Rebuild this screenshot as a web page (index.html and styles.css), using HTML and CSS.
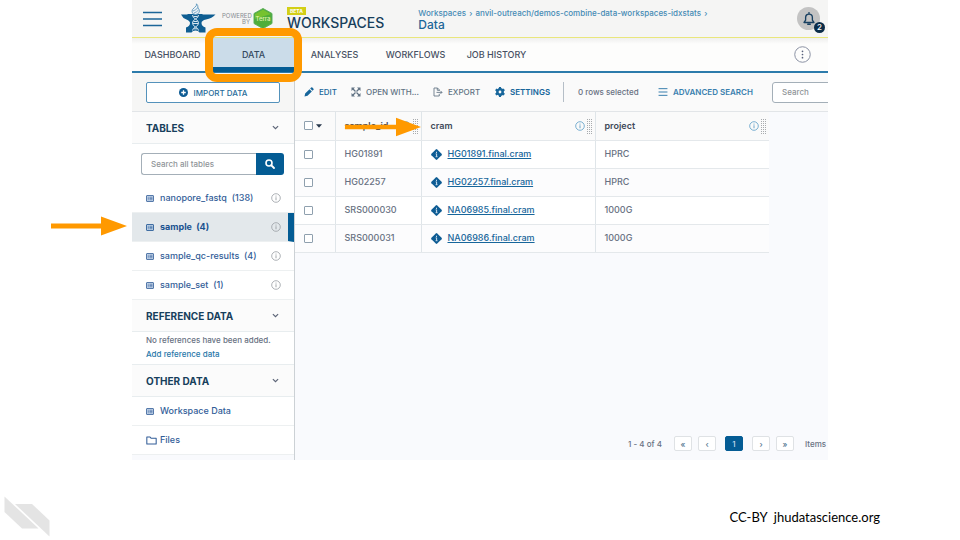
FILE: index.html
```html
<!DOCTYPE html>
<html lang="en">
<head>
<meta charset="utf-8">
<meta name="viewport" content="width=device-width, initial-scale=1">
<title>Workspaces - Data</title>
<link rel="stylesheet" href="styles.css">
</head>
<body>
<svg class="defs" aria-hidden="true">
  <symbol id="i-list" viewBox="0 0 16 14"><rect x="1" y="1" width="14" height="12" rx="1" fill="#c3d4e8" stroke="currentColor" stroke-width="1.600"/><path d="M3.500 4.500h2M7 4.500h6M3.500 7h2M7 7h6M3.500 9.500h2M7 9.500h6" stroke="currentColor" stroke-width="1.200"/></symbol>
  <symbol id="i-info" viewBox="0 0 20 20"><circle cx="10" cy="10" r="8.600" fill="none" stroke="currentColor" stroke-width="1.600"/><path d="M10 8.500v6M10 5.200v2" stroke="currentColor" stroke-width="1.800"/></symbol>
  <symbol id="i-chev" viewBox="0 0 12 8"><path d="M1.500 1.500L6 6l4.500-4.500" fill="none" stroke="currentColor" stroke-width="2"/></symbol>
  <symbol id="i-diamond" viewBox="0 0 20 20"><path d="M8.700.8Q10-.4 11.300.8l7.900 7.900q1.200 1.300 0 2.600l-7.900 7.900q-1.300 1.200-2.600 0L.8 11.300q-1.200-1.300 0-2.600z" fill="#0e5c94"/><path d="M10 5v2.200M8.500 8.800h1.700v4.800M8.400 14h3.400" fill="none" stroke="#dcebf6" stroke-width="1.700"/></symbol>
  <symbol id="i-grip" viewBox="0 0 5 16"><path d="M.5 1v15M2.500 1v15M4.500 1v15" stroke="#a8abae" stroke-width="1" stroke-dasharray="1 1"/></symbol>
</svg>

<div class="slide">
  <div class="app">
    <header class="topbar">
      <button class="icon-btn menu" aria-label="Menu"><svg viewBox="0 0 20 16"><path d="M0 1.500h19M0 8h19M0 14.500h19" stroke="#1c6698" stroke-width="1.600"/></svg></button>
      <a class="logo" href="#" aria-label="AnVIL"><svg viewBox="0 0 35 31">
        <path d="M0 11.500h6.500V11h15v.5H34.500q-3.500 4-9.500 5-4.500 1-4.500 3.500 0 3 4 4.500v5H18.500q-1-2-4-2t-4 2H5v-5q4-1.500 4-4.500 0-2-3.500-3.500Q1.500 15 0 11.500z" fill="#0f5e92"/>
        <path d="M15.500.8q.5 2.200-2 3.700-3 2-2.500 4.500.5 2.500 3.500 2.500t3.800-2.500q.5-2.500-1.300-4 .2-2.700-1.500-4.200z" fill="#eef4f8" stroke="#5b95bb" stroke-width=".9"/>
        <path d="M12 8q3-1 5-3.500M13 10q3-1 4.500-3" fill="none" stroke="#5b95bb" stroke-width=".8"/>
        <path d="M11.500 12q0 2.500 3 4t3 4-3 4-3 3.500M17.500 12q0 2.500-3 4t-3 4 3 4 3 3.500M12.500 13.500h4M12.500 18.500h4M12 20.500h5M12.800 25.800h3.400" fill="none" stroke="#d5e5ef" stroke-width="1"/>
      </svg></a>
      <div class="powered">POWERED<br>BY</div>
      <div class="terra"><svg viewBox="0 0 20 21" aria-hidden="true"><path d="M10 .5l9 5v10l-9 5-9-5v-10z" fill="#43a047" stroke="#5fb357"/><path d="M10 1.500l8 4.500v9l-8 4.500L2 15V6z" fill="#76c22f"/><path d="M1.500 11L18 6v9l-8 4.500L2 15z" fill="#4fae3a"/></svg><span>Terra</span></div>
      <div class="brand"><span class="beta">BETA</span><span class="brand-name">WORKSPACES</span></div>
      <div class="crumbs">
        <nav aria-label="Breadcrumb"><a href="#">Workspaces</a> <span class="sep">›</span> <a href="#">anvil-outreach/demos-combine-data-workspaces-idxstats</a> <span class="sep">›</span></nav>
        <h1>Data</h1>
      </div>
      <button class="icon-btn bell" aria-label="Notifications, 2"><svg viewBox="0 0 24 24"><path d="M3.500 18h17l-2.700-4V9.500a5.800 5.800 0 0 0-11.600 0V14zM12 3.500V1M9.800 21h4.400" fill="none" stroke="#173f60" stroke-width="2.300" stroke-linejoin="round" stroke-linecap="round"/></svg><span class="count">2</span></button>
    </header>

    <nav class="tabs" aria-label="Workspace">
      <a href="#">DASHBOARD</a>
      <a href="#" class="current" aria-current="page">DATA<span class="ring"></span></a>
      <a href="#">ANALYSES</a>
      <a href="#">WORKFLOWS</a>
      <a href="#">JOB HISTORY</a>
      <button class="icon-btn more" aria-label="More actions"><svg viewBox="0 0 16 16"><circle cx="8" cy="8" r="7.300" fill="none" stroke="#858da0" stroke-width=".9"/><circle cx="8" cy="5" r=".8" fill="#59627c"/><circle cx="8" cy="8" r=".8" fill="#59627c"/><circle cx="8" cy="11" r=".8" fill="#59627c"/></svg></button>
    </nav>

    <div class="workspace">
      <aside class="sidebar">
        <div class="import"><button><svg viewBox="0 0 18 18" aria-hidden="true"><circle cx="9" cy="9" r="9" fill="#0e5c94"/><path d="M9 4.500v9M4.500 9h9" stroke="#fff" stroke-width="2.600"/></svg>IMPORT DATA</button></div>

        <h2>TABLES<svg><use href="#i-chev"/></svg></h2>
        <form class="find"><input type="search" aria-label="Search all tables" placeholder="Search all tables"><button type="button" aria-label="Search"><svg viewBox="0 0 20 20"><circle cx="8" cy="8" r="6" fill="none" stroke="#fff" stroke-width="3.200"/><path d="M12.500 12.500l5.500 5.500" stroke="#fff" stroke-width="3.600" stroke-linecap="round"/></svg></button></form>
        <ul>
          <li><a href="#"><svg class="list"><use href="#i-list"/></svg>nanopore_fastq&nbsp; (138)<svg class="info"><use href="#i-info"/></svg></a></li>
          <li><a href="#" class="selected"><svg class="list"><use href="#i-list"/></svg>sample&nbsp; (4)<svg class="info"><use href="#i-info"/></svg></a></li>
          <li><a href="#"><svg class="list"><use href="#i-list"/></svg>sample_qc-results&nbsp; (4)<svg class="info"><use href="#i-info"/></svg></a></li>
          <li><a href="#"><svg class="list"><use href="#i-list"/></svg>sample_set&nbsp; (1)<svg class="info"><use href="#i-info"/></svg></a></li>
        </ul>

        <h2>REFERENCE DATA<svg><use href="#i-chev"/></svg></h2>
        <div class="note"><p>No references have been added.</p><a href="#">Add reference data</a></div>

        <h2>OTHER DATA<svg><use href="#i-chev"/></svg></h2>
        <ul>
          <li><a href="#"><svg class="list"><use href="#i-list"/></svg>Workspace Data</a></li>
          <li><a href="#"><svg class="folder" viewBox="0 0 20 16"><path d="M1.500 1.500h5.500l2.500 2.500h9v10.500h-17z" fill="none" stroke="currentColor" stroke-width="1.900" stroke-linejoin="round"/></svg>Files</a></li>
        </ul>
      </aside>

      <main>
        <div class="toolbar">
          <button class="edit"><svg viewBox="0 0 20 20"><path d="M1 19l1.300-6L11 4.300 15.700 9 7 17.700zM12.300 3l2-2q1.200-1 2.400 0L19 3.300q1 1.200 0 2.400l-2 2z" fill="currentColor"/></svg>EDIT</button>
          <button class="open"><svg viewBox="0 0 20 20"><path d="M3 3l14 14M17 3L3 17" stroke="currentColor" stroke-width="2.600"/><path d="M1 1h7L1 8zM19 1v7l-7-7zM1 19v-7l7 7zM19 19h-7l7-7z" fill="currentColor"/><path d="M10 8l2 2-2 2-2-2z" fill="#fafafa"/></svg>OPEN WITH...</button>
          <button class="export"><svg viewBox="0 0 20 20"><path d="M12.500 13.500V18H2V2h7l3.500 3.500V8M8.500 2v4.500h4M7 10.800h11M15 7.800l3 3-3 3" fill="none" stroke="currentColor" stroke-width="1.700"/></svg>EXPORT</button>
          <button class="settings"><svg viewBox="0 0 20 20"><circle cx="10" cy="10" r="5.300" fill="none" stroke="currentColor" stroke-width="5"/><path d="M10 0v4M10 16v4M1.300 5l3.500 2M15.200 13l3.500 2M1.300 15l3.500-2M15.200 7l3.500-2" stroke="currentColor" stroke-width="4.200"/></svg>SETTINGS</button>
          <span class="rows">0 rows selected</span>
          <button class="advanced"><svg viewBox="0 0 18 16"><path d="M1 2h16M1 8h16M1 14h16" stroke="currentColor" stroke-width="1.800"/></svg>ADVANCED SEARCH</button>
          <input type="search" aria-label="Search rows" placeholder="Search">
        </div>

        <table>
          <colgroup><col class="c-check"><col class="c-id"><col class="c-wide"><col class="c-wide"></colgroup>
          <thead><tr>
            <th><span class="pick"><input type="checkbox" aria-label="Select all"><svg class="caret" viewBox="0 0 10 6"><path d="M0 0h10L5 6z" fill="#27374b"/></svg></span></th>
            <th><span class="head">sample_id<svg class="info"><use href="#i-info"/></svg><svg class="grip"><use href="#i-grip"/></svg></span></th>
            <th><span class="head">cram<svg class="info"><use href="#i-info"/></svg><svg class="grip"><use href="#i-grip"/></svg></span></th>
            <th><span class="head">project<svg class="info"><use href="#i-info"/></svg><svg class="grip"><use href="#i-grip"/></svg></span></th>
          </tr></thead>
          <tbody>
            <tr><td><span class="pick"><input type="checkbox" aria-label="Select HG01891"></span></td><td>HG01891</td><td><span class="file"><svg><use href="#i-diamond"/></svg><a href="#">HG01891.final.cram</a></span></td><td>HPRC</td></tr>
            <tr><td><span class="pick"><input type="checkbox" aria-label="Select HG02257"></span></td><td>HG02257</td><td><span class="file"><svg><use href="#i-diamond"/></svg><a href="#">HG02257.final.cram</a></span></td><td>HPRC</td></tr>
            <tr><td><span class="pick"><input type="checkbox" aria-label="Select SRS000030"></span></td><td>SRS000030</td><td><span class="file"><svg><use href="#i-diamond"/></svg><a href="#">NA06985.final.cram</a></span></td><td>1000G</td></tr>
            <tr><td><span class="pick"><input type="checkbox" aria-label="Select SRS000031"></span></td><td>SRS000031</td><td><span class="file"><svg><use href="#i-diamond"/></svg><a href="#">NA06986.final.cram</a></span></td><td>1000G</td></tr>
          </tbody>
        </table>

        <div class="pager">
          <span class="range">1 - 4 of 4</span>
          <button aria-label="First page">«</button>
          <button aria-label="Previous page">‹</button>
          <button class="on">1</button>
          <button aria-label="Next page">›</button>
          <button aria-label="Last page">»</button>
          <span class="items">Items</span>
        </div>
      </main>
    </div>
    <svg class="arrow to-table" viewBox="0 0 76 20" aria-hidden="true"><path d="M0 7.500h50V.5L76 10 50 19.500v-7H0z" fill="#ff9900"/></svg>
    <svg class="arrow to-column" viewBox="0 0 76 20" aria-hidden="true"><path d="M0 7.800h51V.8L76 10 51 19.200v-7H0z" fill="#ff9900"/></svg>
  </div>

  <footer>
    <svg viewBox="0 0 46 41" aria-hidden="true"><path d="M.5.5l34 32H18L.5 16z" fill="#e4e4e4"/><path d="M11 8h17l17.500 16.500v16z" fill="#e4e4e4"/></svg>
    <p>CC-BY&nbsp; jhudatascience.org</p>
  </footer>
</div>
</body>
</html>
```
FILE: styles.css
```css
* { box-sizing: border-box; }

body {
  margin: 0;
  background: #fff;
  color: #687182;
  font: 500 8px/12px Inter, "Open Sans", sans-serif;
}

a { color: inherit; text-decoration: none; }
button, input { margin: 0; font: inherit; color: inherit; }
button { display: flex; align-items: center; padding: 0; border: 0; background: none; cursor: pointer; white-space: nowrap; }
h1, h2, p, ul { margin: 0; padding: 0; }
ul { list-style: none; }
svg { display: block; flex: none; }
.defs { position: absolute; width: 0; height: 0; }

.slide { min-height: 100vh; display: flex; flex-direction: column; justify-content: space-between; }
.app { position: relative; margin: 0 13.75%; background: #f9fafd; }

/* Top bar */
.topbar { display: flex; align-items: center; height: 38px; padding: 0 3px 0 11px; background: #f5f5f4; border-bottom: 1px solid #e9e67c; white-space: nowrap; }
.menu svg { width: 20px; height: 16px; }
.logo { margin-left: 18px; }
.logo svg { width: 35px; height: 31px; }
.powered { width: 28px; margin-left: 6px; color: #858b91; font-size: 6px; line-height: 6px; font-weight: 400; text-align: right; }
.terra { display: grid; place-items: center; margin-left: 3px; }
.terra > * { grid-area: 1 / 1; }
.terra svg { width: 20px; height: 21px; }
.terra span { color: #e5f7b0; font-size: 6px; line-height: 8px; }
.brand { display: flex; flex-direction: column; align-items: flex-start; margin-left: 14px; }
.beta { padding: 0 3px; background: #d3cf16; color: #fff; font-size: 5px; line-height: 8px; font-weight: 700; }
.brand-name { color: #173f5c; font-size: 14px; line-height: 16px; }
.crumbs { margin-left: 34px; color: #468bb5; }
.sep { margin: 0 1px; }
.crumbs h1 { color: #1c6698; font-size: 12px; line-height: 12px; font-weight: 500; }
.bell { position: relative; justify-content: center; width: 23px; height: 23px; margin-left: auto; margin-right: 5px; border-radius: 50%; background: #c3c3c3; }
.bell svg { width: 14px; height: 14px; }
.count { position: absolute; right: -5px; bottom: -3px; width: 11px; height: 11px; border-radius: 50%; background: #0b2c49; color: #fff; font-size: 8px; line-height: 11px; }

/* Tabs */
.tabs { display: flex; height: 35px; background: linear-gradient(#efefee, #fdfdfc 6px); border-bottom: 2px solid #2c7bab; color: #475063; font-size: 9px; }
.tabs a { display: grid; place-items: center; flex: 0 0 81px; }
.tabs .current { position: relative; background: #cbdce9; border-bottom: 5px solid #045c94; margin-bottom: -1px; padding-top: 5px; color: #34495f; }
.ring { position: absolute; inset: -10px -8px -15px; z-index: 2; border: 8px solid #ff9900; border-radius: 12px; }
.more { margin-left: auto; margin-right: 17px; }
.more svg { width: 17px; height: 17px; }

/* Body */
.workspace { display: grid; grid-template-columns: 163px minmax(0, 1fr); }
.sidebar { border-right: 1px solid #ccd1d5; padding-bottom: 5px; }
.import { height: 39px; padding: 9px 14px; background: #f6f6f5; border-bottom: 1px solid #e2e5e8; }
.import button { justify-content: center; gap: 6px; width: 100%; height: 21px; border: 1px solid #5492bb; border-radius: 2px; background: #fff; color: #286c9a; }
.import svg { width: 9px; height: 9px; }
.sidebar h2 { display: flex; align-items: center; justify-content: space-between; height: 32px; padding: 0 15px 0 14px; background: #fbfbfb; border-bottom: 1px solid #e8edef; color: #173f5c; font-size: 10px; font-weight: 700; }
.sidebar h2 svg { width: 7px; height: 5px; color: #5c6577; }
.find { display: flex; padding: 9px 10px 9px 9px; background: #fff; }
.find input { flex: 1; min-width: 0; height: 22px; padding: 0 9px; border: 1px solid #a4afb8; border-right: 0; border-radius: 3px 0 0 3px; background: #fff; }
.find button { justify-content: center; width: 28px; height: 22px; border-radius: 0 3px 3px 0; background: #045c94; }
.find svg { width: 10px; height: 10px; }
input::placeholder { color: #8f9498; opacity: 1; }
input[type="search"] { outline: 0; appearance: none; }
.sidebar li a { display: flex; align-items: center; height: 29px; padding: 0 13px 0 14px; background: #fff; border-bottom: 1px solid #edf0f1; color: #325d98; font-size: 9px; }
.sidebar li .selected { background: #e3e8eb; border-right: 6px solid #045c94; padding-right: 7px; color: #1a5290; font-weight: 700; }
.list { width: 8px; height: 7px; margin-right: 6px; }
.folder { width: 11px; height: 9px; margin-right: 3px; }
.info { width: 10px; height: 10px; margin-left: auto; color: #999ea3; }
.note { height: 33px; padding: 1px 14px; background: #fff; border-bottom: 1px solid #e8edef; line-height: 14px; white-space: nowrap; }
.note a { color: #2777a9; }

/* Toolbar */
main { display: flex; flex-direction: column; min-width: 0; overflow: hidden; }
.toolbar { display: flex; align-items: center; height: 39px; padding-left: 9px; background: #fafafa; border-bottom: 1px solid #e2e5e8; white-space: nowrap; }
.toolbar > * { flex: none; }
.toolbar svg { width: 10px; height: 10px; margin-right: 5px; }
.edit, .settings { color: #17669b; }
.open, .export { color: #617283; }
.edit { width: 47px; }
.open { width: 82px; }
.export { width: 62px; }
.settings { width: 68px; font-weight: 600; }
.rows { width: 95px; padding-left: 14px; border-left: 1px solid #b5bec7; line-height: 20px; }
.advanced { width: 114px; color: #397fae; font-weight: 600; }
.toolbar input { width: 120px; height: 21px; padding: 0 9px; border: 1px solid #a4afb8; border-radius: 3px; background: #fff; }

/* Data table */
table { width: 474px; border-collapse: collapse; table-layout: fixed; background: #fff; font-size: 9px; }
.c-check { width: 40px; }
.c-id { width: 86px; }
.c-wide { width: 174px; }
th, td { height: 28px; padding: 0 0 0 9px; text-align: left; border-bottom: 1px solid #e4e8eb; border-right: 1px solid #dfe5e9; }
th:last-child, td:last-child { border-right: 0; }
th { background: #fafafa; color: #3f4959; font-weight: 600; }
tbody tr:nth-child(even) { background: #fcfcfd; }
.head { display: flex; align-items: center; padding-right: 3px; }
.head .info { color: #5b9dc6; }
.grip { width: 5px; height: 16px; margin-left: 2px; }
.pick { display: flex; align-items: center; gap: 3px; }
.pick input { appearance: none; width: 9px; height: 9px; border: 1px solid #8fa0ae; border-radius: 1px; background: #fff; }
.caret { width: 6px; height: 4px; }
.file { display: flex; align-items: center; gap: 6px; }
.file svg { width: 11px; height: 11px; }
.file a { color: #17669b; text-decoration: underline; }

/* Pager */
.pager { display: flex; align-items: center; gap: 6px; margin-top: auto; padding: 0 0 9px 333px; white-space: nowrap; }
.pager > * { flex: none; }
.range { width: 40px; }
.pager button { justify-content: center; width: 18px; height: 15px; border: 1px solid #dfe2e5; border-radius: 2px; background: #fff; color: #52758f; }
.pager .on { margin: 0 3px; border-color: #045c94; background: #045c94; color: #c5dced; }
.items { margin-left: 5px; }

/* Callouts over the app */
.arrow { position: absolute; width: 76px; height: 20px; z-index: 2; }
.to-table { left: -81px; top: 216px; }
.to-column { left: 213px; top: 117px; }

footer { display: flex; align-items: center; justify-content: space-between; padding: 0 80px 3px 4px; }
footer svg { width: 46px; height: 41px; }
footer p { color: #000; font: 13px/16px Lato, sans-serif; }
```
